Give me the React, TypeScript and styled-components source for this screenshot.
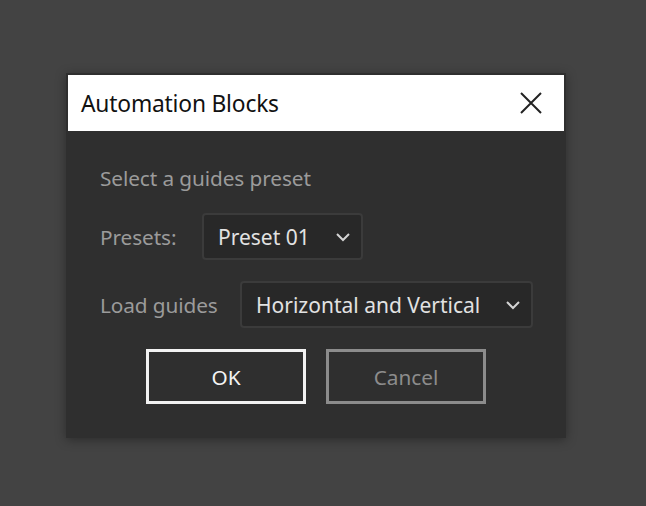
import React from "react";
import styled, { createGlobalStyle } from "styled-components";

const Global = createGlobalStyle`
  html, body { margin: 0; padding: 0; background: #434343; }
  body { width: 646px; height: 506px; overflow: hidden; font-family: "Noto Sans", "Open Sans", sans-serif; }
`;

const Page = styled.div`
  padding: 73px 0 0 66px;
`;

const Dialog = styled.div`
  width: 496px;
  padding: 2px;
  background: #2f2f2f;
  box-shadow: 0 2px 10px rgba(0, 0, 0, 0.35);
`;

const TitleBar = styled.div`
  height: 56px;
  background: #ffffff;
  display: flex;
  align-items: center;
  justify-content: space-between;
  padding: 0 22px 0 13px;
`;

const Title = styled.div`
  font-size: 22.8px;
  color: #111;
  letter-spacing: -0.2px;
`;

const Close = styled.button`
  border: 0;
  background: transparent;
  padding: 0;
  width: 22px;
  height: 22px;
  display: flex;
  cursor: pointer;
`;

const Body = styled.div`
  padding: 33px 0 32px 32px;
  display: flex;
  flex-direction: column;
`;

const Heading = styled.div`
  font-size: 20.8px;
  color: #9b9b9b;
  line-height: 28px;
  margin-bottom: 21px;
  letter-spacing: -0.1px;
`;

const Row = styled.div`
  display: flex;
  align-items: center;
  margin-bottom: 21px;
`;

const Label = styled.div<{ $w: number }>`
  width: ${(p) => p.$w}px;
  font-size: 20.8px;
  color: #9b9b9b;
  letter-spacing: -0.1px;
`;

const Select = styled.div<{ $w: number }>`
  width: ${(p) => p.$w}px;
  height: 47px;
  box-sizing: border-box;
  border: 2px solid #3b3b3b;
  border-radius: 4px;
  background: #282828;
  display: flex;
  align-items: center;
  justify-content: space-between;
  padding: 0 10px 0 14px;
  color: #e2e2e2;
  font-size: 21px;
`;

const Buttons = styled.div`
  display: flex;
  justify-content: center;
  gap: 20px;
  padding-right: 32px;
`;

const Button = styled.button<{ $primary?: boolean }>`
  width: 160px;
  height: 55px;
  box-sizing: border-box;
  background: transparent;
  border: 3px solid ${(p) => (p.$primary ? "#f2f2f2" : "#8c8c8c")};
  color: ${(p) => (p.$primary ? "#f4f4f4" : "#8c8c8c")};
  font-family: inherit;
  font-size: 20.8px;
  cursor: pointer;
`;

const Chevron = () => (
  <svg width="16" height="10" viewBox="0 0 16 10">
    <path d="M2 2 L8 8 L14 2" fill="none" stroke="#d4d4d4" strokeWidth="2" />
  </svg>
);

export default function App() {
  return (
    <>
      <Global />
      <Page>
        <Dialog>
          <TitleBar>
            <Title>Automation Blocks</Title>
            <Close aria-label="Close">
              <svg width="22" height="22" viewBox="0 0 22 22">
                <path d="M1 1 L21 21 M21 1 L1 21" stroke="#222" strokeWidth="2" />
              </svg>
            </Close>
          </TitleBar>
          <Body>
            <Heading>Select a guides preset</Heading>
            <Row>
              <Label $w={102}>Presets:</Label>
              <Select $w={161}>
                <span>Preset 01</span>
                <Chevron />
              </Select>
            </Row>
            <Row>
              <Label $w={140}>Load guides</Label>
              <Select $w={293}>
                <span>Horizontal and Vertical</span>
                <Chevron />
              </Select>
            </Row>
            <Buttons>
              <Button $primary>OK</Button>
              <Button>Cancel</Button>
            </Buttons>
          </Body>
        </Dialog>
      </Page>
    </>
  );
}
